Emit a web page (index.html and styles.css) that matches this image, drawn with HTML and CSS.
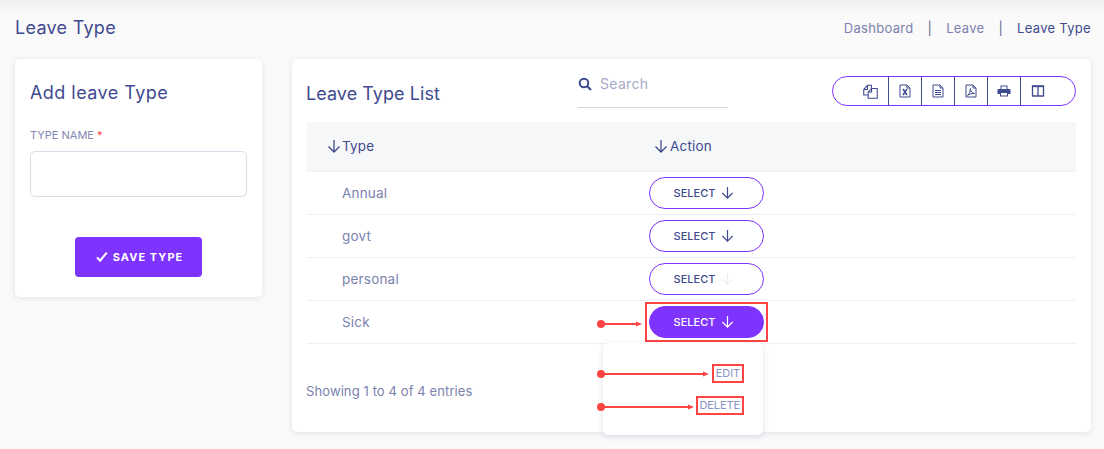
FILE: index.html
```html
<!DOCTYPE html>
<html lang="en">
<head>
<meta charset="utf-8">
<title>Leave Type</title>
<link rel="stylesheet" href="styles.css">
</head>
<body>
<div class="page">
  <header class="page-head">
    <h1 class="page-title">Leave Type</h1>
    <nav class="crumbs">
      <a class="crumb">Dashboard</a><span class="crumb-sep">|</span>
      <a class="crumb">Leave</a><span class="crumb-sep">|</span>
      <a class="crumb current">Leave Type</a>
    </nav>
  </header>
  <main class="columns">
    <section class="card form-card">
      <h2 class="card-title">Add leave Type</h2>
      <label class="field-label" for="tn">TYPE NAME <span class="req">*</span></label>
      <input class="field-input" id="tn" type="text">
      <div class="form-actions">
        <button class="save-btn"><svg class="check" viewBox="0 0 14 12"><path d="M1.200 6.400 4.800 10.400 12.600 .8" fill="none" stroke="#fff" stroke-width="2.400"/></svg>SAVE TYPE</button>
      </div>
    </section>
    <section class="card list-card">
      <div class="list-head">
        <h2 class="card-title list-title">Leave Type List</h2>
        <div class="search">
          <svg class="search-icon" viewBox="0 0 14 14"><circle cx="6" cy="6" r="4.300" fill="none" stroke="#3f4a8f" stroke-width="2"/><path d="M9.200 9.200 13 13" stroke="#3f4a8f" stroke-width="2.200"/></svg>
          <span class="search-text">Search</span>
        </div>
        <div class="tools">
          <span class="tool tool-first"><svg class="tool-icon copy" viewBox="0 0 14 14"><path d="M.7 5.200 4.200 1.200H7.800V4.200M4.200 1.200V5.200H.7V10.200H4.800" class="ln"/><path d="M4.800 7.500 8 4.200H13.300V13.300H4.800ZM8 4.200V7.500H4.800" class="ln"/></svg></span>
          <span class="tool"><svg class="tool-icon" viewBox="0 0 14 14"><path d="M2 1H9L12 4V13H2Z M9 1V4H12" class="ln"/><path d="M5 5 9 11 M9 5 5 11" class="ln thick"/></svg></span>
          <span class="tool"><svg class="tool-icon" viewBox="0 0 14 14"><path d="M2 1H9L12 4V13H2Z M9 1V4H12 M4 6.500H10 M4 8.500H10 M4 10.500H10" class="ln"/></svg></span>
          <span class="tool"><svg class="tool-icon" viewBox="0 0 14 14"><path d="M2 1H9L12 4V13H2Z M9 1V4H12 M3.500 11.500C5.500 10 6.500 7 6.300 4.500 6.800 7.500 8 9 10.500 9.500 8 9.300 5.500 10 3.500 11.500Z" class="ln"/></svg></span>
          <span class="tool"><svg class="tool-icon" viewBox="0 0 14 14"><path d="M3.500 5V1.500H10.500V5H12.500Q13.500 5 13.500 6V10H11V12.500H3V10H.5V6Q.5 5 1.500 5Z" fill="#3f4a8f"/><path d="M4.500 2.500H9.500V5H4.500ZM4 9H10V11.500H4Z" fill="#fff"/></svg></span>
          <span class="tool tool-last"><svg class="tool-icon" viewBox="0 0 14 14"><path d="M1.500 2H12.500V12H1.500Z M7 2V12" class="ln wide"/><path d="M1.500 2.500H12.500" class="ln wide"/></svg></span>
        </div>
      </div>
      <table class="grid">
        <thead>
          <tr>
            <th class="col-type"><svg class="sort type-sort" viewBox="0 0 14 14"><path d="M7 1V13M1.500 7.500 7 13 12.500 7.500" class="arrow"/></svg>Type</th>
            <th class="col-action"><svg class="sort" viewBox="0 0 14 14"><path d="M7 1V13M1.500 7.500 7 13 12.500 7.500" class="arrow"/></svg>Action</th>
          </tr>
        </thead>
        <tbody>
          <tr><td class="name">Annual</td><td class="act"><button class="select-btn">SELECT <svg class="sel-arrow" viewBox="0 0 14 14"><path d="M7 1V13M1.500 7.500 7 13 12.500 7.500" class="arrow"/></svg></button></td></tr>
          <tr><td class="name">govt</td><td class="act"><button class="select-btn">SELECT <svg class="sel-arrow" viewBox="0 0 14 14"><path d="M7 1V13M1.500 7.500 7 13 12.500 7.500" class="arrow"/></svg></button></td></tr>
          <tr><td class="name">personal</td><td class="act"><button class="select-btn">SELECT <svg class="sel-arrow" viewBox="0 0 14 14"><path d="M7 1V13M1.500 7.500 7 13 12.500 7.500" class="arrow faint"/></svg></button></td></tr>
          <tr>
            <td class="name">Sick</td>
            <td class="act">
              <div class="select-wrap">
                <button class="select-btn active">SELECT <svg class="sel-arrow" viewBox="0 0 14 14"><path d="M7 1V13M1.500 7.500 7 13 12.500 7.500" class="arrow white"/></svg></button>
                <div class="menu">
                  <a class="menu-item"><span class="mark">EDIT</span></a>
                  <a class="menu-item"><span class="mark">DELETE</span></a>
                </div>
              </div>
            </td>
          </tr>
        </tbody>
      </table>
      <p class="entries">Showing 1 to 4 of 4 entries</p>
    </section>
  </main>
  <svg class="notes" width="1104" height="449" viewBox="0 0 1104 449">
    <g class="note">
      <circle cx="601" cy="324" r="4"/><path d="M601 324H640"/><path class="tip" d="M636 321.500 642 324 636 326.500Z"/>
      <circle cx="601" cy="374" r="4"/><path d="M601 374H707"/><path class="tip" d="M703 371.500 709 374 703 376.500Z"/>
      <circle cx="601" cy="407" r="4"/><path d="M601 407H692"/><path class="tip" d="M688 404.500 694 407 688 409.500Z"/>
    </g>
  </svg>
</div>
</body>
</html>
```
FILE: styles.css
```css
* { box-sizing: border-box; }
html, body { margin: 0; padding: 0; }
body {
  width: 1104px;
  height: 449px;
  overflow: hidden;
  background: #fafafb;
  font-family: Inter, "Liberation Sans", sans-serif;
  color: #3f4a8f;
}
.page {
  position: relative;
  height: 449px;
  padding: 0 13px 0 15px;
  background: linear-gradient(#f0f0f3 0, #fafafb 14px);
}
.page-head {
  height: 59px;
  display: flex;
  justify-content: space-between;
  align-items: flex-start;
  padding-top: 16px;
}
.page-title {
  margin: 0;
  font-size: 18px;
  line-height: 24px;
  font-weight: 400;
  letter-spacing: .28px;
  color: #3f4a8f;
}
.crumbs {
  display: flex;
  align-items: center;
  font-size: 13px;
  line-height: 24px;
  letter-spacing: .3px;
  color: #7b82ad;
}
.crumb.current { color: #3f4a8f; }
.crumb-sep { margin: 0 14px 0 14px; color: #5d648f; }
.columns {
  display: grid;
  grid-template-columns: 247px 799px;
  gap: 30px;
  align-items: start;
}
.card {
  background: #fff;
  border-radius: 5px;
  box-shadow: 0 1px 6px rgba(60, 64, 110, .13);
}
.form-card {
  height: 238px;
  padding: 22px 15px 0;
}
.card-title {
  margin: 0;
  font-size: 18px;
  line-height: 24px;
  font-weight: 400;
  letter-spacing: .45px;
  color: #3f4a8f;
}
.field-label {
  display: block;
  margin-top: 22px;
  font-size: 11px;
  line-height: 16px;
  color: #8288b3;
}
.req { color: #f44; }
.field-input {
  display: block;
  width: 217px;
  height: 46px;
  margin-top: 8px;
  border: 1px solid #dcdcea;
  border-radius: 5px;
  background: #fff;
}
.form-actions {
  display: flex;
  justify-content: center;
  margin-top: 40px;
}
.save-btn {
  display: flex;
  align-items: center;
  justify-content: center;
  width: 127px;
  height: 40px;
  padding: 0 0 0 2px;
  border: 0;
  border-radius: 4px;
  background: #7f33ff;
  color: #fff;
  font-family: inherit;
  font-size: 11px;
  font-weight: 700;
  letter-spacing: 1.050px;
}
.check { width: 12px; height: 12px; margin-right: 5px; }
.list-card {
  position: relative;
  height: 373px;
  padding: 17px 15px 0;
}
.list-head {
  height: 46px;
  display: flex;
  align-items: flex-start;
}
.list-title { width: 271px; margin: 6px 0 0 -1px; letter-spacing: .05px; flex: none; }
.search {
  width: 150px;
  height: 32px;
  margin-left: 1px;
  display: flex;
  align-items: flex-start;
  border-bottom: 1px solid #d4d5e4;
}
.search-icon { width: 14px; height: 14px; margin-top: 1px; }
.search-text {
  margin-left: 8px;
  font-size: 14px;
  line-height: 16px;
  letter-spacing: .3px;
  color: #a5a9cb;
}
.tools {
  display: flex;
  width: 244px;
  height: 30px;
  margin-left: 104px;
  border: 1px solid #7f33ff;
  border-radius: 15px;
}
.tool {
  width: 33.400px;
  display: flex;
  align-items: center;
  justify-content: center;
  border-right: 1px solid #3f4a8f;
}
.tool-first { width: 56px; padding-left: 20px; }
.tool-last { border-right: 0; width: 54px; padding-right: 21px; }
.tool-icon { width: 14px; height: 14px; }
.tool-icon.copy { width: 15px; height: 15px; }
.ln { fill: none; stroke: #3f4a8f; stroke-width: 1; }
.ln.thick { stroke-width: 1.500; }
.ln.wide { stroke-width: 1.300; }
.grid {
  width: 769px;
  border-collapse: collapse;
  table-layout: fixed;
  font-size: 13.500px;
}
.grid th {
  height: 49px;
  padding: 0;
  background: #f6f7f9;
  border-bottom: 1px solid #eef0f7;
  text-align: left;
  font-weight: 400;
  color: #3f4a8f;
  letter-spacing: .2px;
}
.col-type { width: 342px; padding-left: 20px !important; }
.col-action { padding-left: 5px !important; }
.sort { width: 14px; height: 14px; vertical-align: -2px; margin-right: 2px; }
.sort.type-sort { margin-right: 1px; }
.arrow { fill: none; stroke: #3f4a8f; stroke-width: 1.300; }
.arrow.faint { stroke: #eceef7; }
.arrow.white { stroke: #fff; }
.grid td {
  height: 43px;
  padding: 0;
  border-bottom: 1px solid #eef0f7;
}
.grid td.name {
  padding: 1px 0 0 35px;
  color: #7b82ad;
  letter-spacing: .2px;
}
.select-wrap {
  position: relative;
  width: 115px;
  height: 32px;
  outline: 2px solid #f44;
  outline-offset: 2px;
}
.select-btn {
  display: flex;
  align-items: center;
  justify-content: center;
  gap: 6px;
  width: 115px;
  height: 32px;
  padding: 1px 5px 0 0;
  border: 1px solid #7f33ff;
  border-radius: 16px;
  background: #fff;
  color: #3f4a8f;
  font-family: inherit;
  font-size: 11px;
  font-weight: 500;
}
.sel-arrow { width: 13px; height: 13px; margin-top: -1px; }
.select-btn.active { background: #7f33ff; color: #fff; }
.menu {
  position: absolute;
  left: -46px;
  top: 37px;
  width: 160px;
  height: 92px;
  padding: 23px 21px 0 0;
  background: #fff;
  border-radius: 5px;
  box-shadow: 0 2px 6px rgba(60, 64, 110, .15);
  text-align: right;
}
.menu-item {
  display: block;
  height: 32px;
  font-size: 11px;
  line-height: 13px;
  letter-spacing: -.1px;
  color: #8893c4;
}
.mark {
  display: inline-block;
  padding: 1px 2px;
  outline: 2px solid #f44;
}
.entries {
  margin: 38px 0 0 -1px;
  font-size: 13px;
  line-height: 18px;
  color: #7b82ad;
  letter-spacing: .1px;
}
.notes {
  position: absolute;
  left: 0;
  top: 0;
  pointer-events: none;
}
.note circle { fill: #f44; }
.note path { stroke: #f44; stroke-width: 2; fill: none; }
.note path.tip { fill: #f44; stroke: none; }
```
